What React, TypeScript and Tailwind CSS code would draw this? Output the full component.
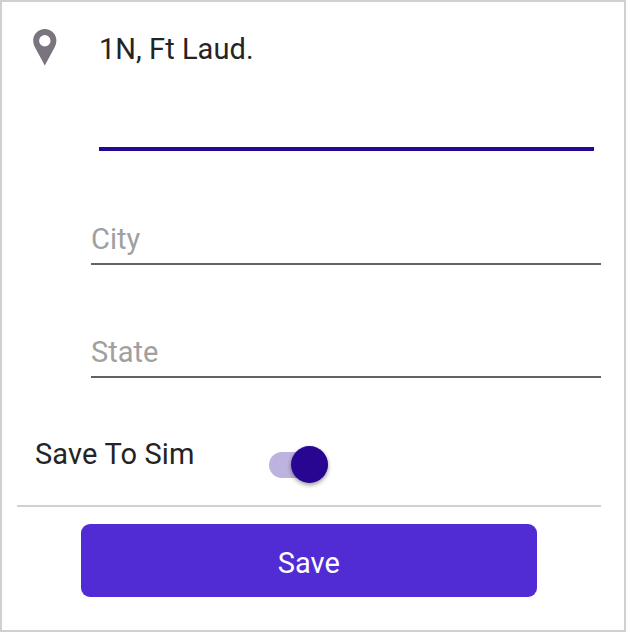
export default function App() {
  return (
    <main className="flex h-[632px] w-[626px] flex-col border-2 border-[#d0d0d0] bg-white font-[Roboto,sans-serif] text-[29px] leading-[34px] font-normal text-[#242424]">
      <section className="flex h-[149px] pl-[31px] pt-[27px]">
        <svg viewBox="0 0 24 37" className="h-[37px] w-[24px]" fill="#79747e" fillRule="evenodd">
          <path d="M11.8 0C5.3 0 .2 5.2.2 11.6c0 2.5.8 4.8 2 7.2L11.8 36.5 21.4 18.8c1.2-2.4 2-4.7 2-7.2C23.4 5.2 18.3 0 11.8 0Zm0 6a5.7 5.7 0 1 1 0 11.4 5.7 5.7 0 0 1 0-11.4Z" />
        </svg>
        <div className="ml-[42px] h-[122px] w-[495px] border-b-4 border-[#260793] pt-[3px] tracking-[0.05px]">1N, Ft Laud.</div>
      </section>
      <div className="ml-[89px] mt-[69px] h-[45px] w-[510px] border-b-2 border-[#626262] pt-[2px] text-[#a0a0a0]">City</div>
      <div className="ml-[89px] mt-[68px] h-[45px] w-[510px] border-b-2 border-[#626262] pt-[2px] text-[#a0a0a0]">State</div>
      <section className="ml-[14.5px] flex h-[129px] w-[584.5px] border-b-2 border-[#d0d0d0] pl-[18.5px] pt-[59px]">
        <span className="w-[234px] tracking-[0.15px]">Save To Sim</span>
        <button role="switch" aria-checked="true" aria-label="Save To Sim" className="mt-[14.5px] flex h-[26px] w-[59px] items-center justify-end rounded-full bg-[#beb2df]">
          <span className="h-[37px] w-[37px] shrink-0 rounded-full bg-[#280691] shadow-[0_2px_4px_rgba(0,0,0,0.4)]" />
        </button>
      </section>
      <button className="ml-[78.5px] mt-[17px] flex h-[73px] w-[456.5px] items-center justify-center rounded-[9px] bg-[#512bd4] pt-[5px] text-white">Save</button>
    </main>
  );
}
